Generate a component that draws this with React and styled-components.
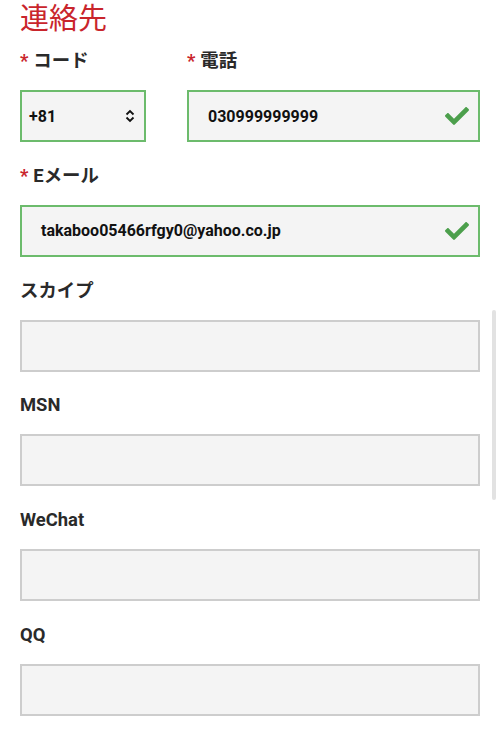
import React from 'react'
import styled, { createGlobalStyle } from 'styled-components';
import { FaCheck } from 'react-icons/fa';

const GlobalStyle = createGlobalStyle`
  body {
    margin: 0;
    background: #fff;
    font-family: Roboto, "Noto Sans CJK JP", sans-serif;
    overflow: hidden;
  }
`;

const Wrapper = styled.div`
  padding: 0 20px;
`;

const Title = styled.h2`
  margin: 0 0 11px;
  font-size: 29px;
  line-height: 38px;
  font-weight: 400;
  color: #c9252c;
`;

const Row = styled.div`
  display: grid;
  grid-template-columns: 126px 1fr;
  column-gap: 41px;
`;

const Field = styled.div`
  margin-bottom: 21.75px;
`;

const Label = styled.div`
  height: 24px;
  line-height: 24px;
  margin-bottom: 17px;
  font-size: 18.4px;
  font-weight: 700;
  color: #2a2a2a;
`;

const Star = styled.span`
  color: #c9252c;
  margin-right: 5px;
`;

const Box = styled.div`
  box-sizing: border-box;
  height: 52px;
  display: flex;
  align-items: center;
  justify-content: space-between;
  padding: 0 ${p => (p.$select ? '9px 0 7px' : '7px 0 19px')};
  background: #f4f4f4;
  border: 2px solid ${p => (p.$valid ? '#6cbb6c' : '#cdcdcd')};
  font-size: 16px;
  font-weight: 700;
  color: #111;
`;

const Check = styled(FaCheck)`
  color: #4c9f4c;
  width: 28px;
  height: 24px;
`;

const ScrollThumb = styled.div`
  position: fixed;
  right: 4px;
  top: 310px;
  width: 4px;
  height: 190px;
  border-radius: 2px;
  background: #e2e2e2;
`;

const Chevron = () => (
  <svg width="10" height="14" viewBox="0 0 10 14" fill="none" stroke="#111" strokeWidth="1.8">
    <polyline points="1.5,5.5 5,2 8.5,5.5" />
    <polyline points="1.5,8.5 5,12 8.5,8.5" />
  </svg>
);

const extras = ['スカイプ', 'MSN', 'WeChat', 'QQ'];

const App = () => {
  return (
    <Wrapper>
      <GlobalStyle />
      <Title>連絡先</Title>
      <Row>
        <Field>
          <Label><Star>*</Star>コード</Label>
          <Box $valid $select>
            <span>+81</span>
            <Chevron />
          </Box>
        </Field>
        <Field>
          <Label><Star>*</Star>電話</Label>
          <Box $valid>
            <span>030999999999</span>
            <Check />
          </Box>
        </Field>
      </Row>
      <Field>
        <Label><Star>*</Star>Eメール</Label>
        <Box $valid>
          <span>takaboo05466rfgy0@yahoo.co.jp</span>
          <Check />
        </Box>
      </Field>
      {extras.map(name => (
        <Field key={name}>
          <Label>{name}</Label>
          <Box />
        </Field>
      ))}
      <ScrollThumb />
    </Wrapper>
  )
}

export default App
